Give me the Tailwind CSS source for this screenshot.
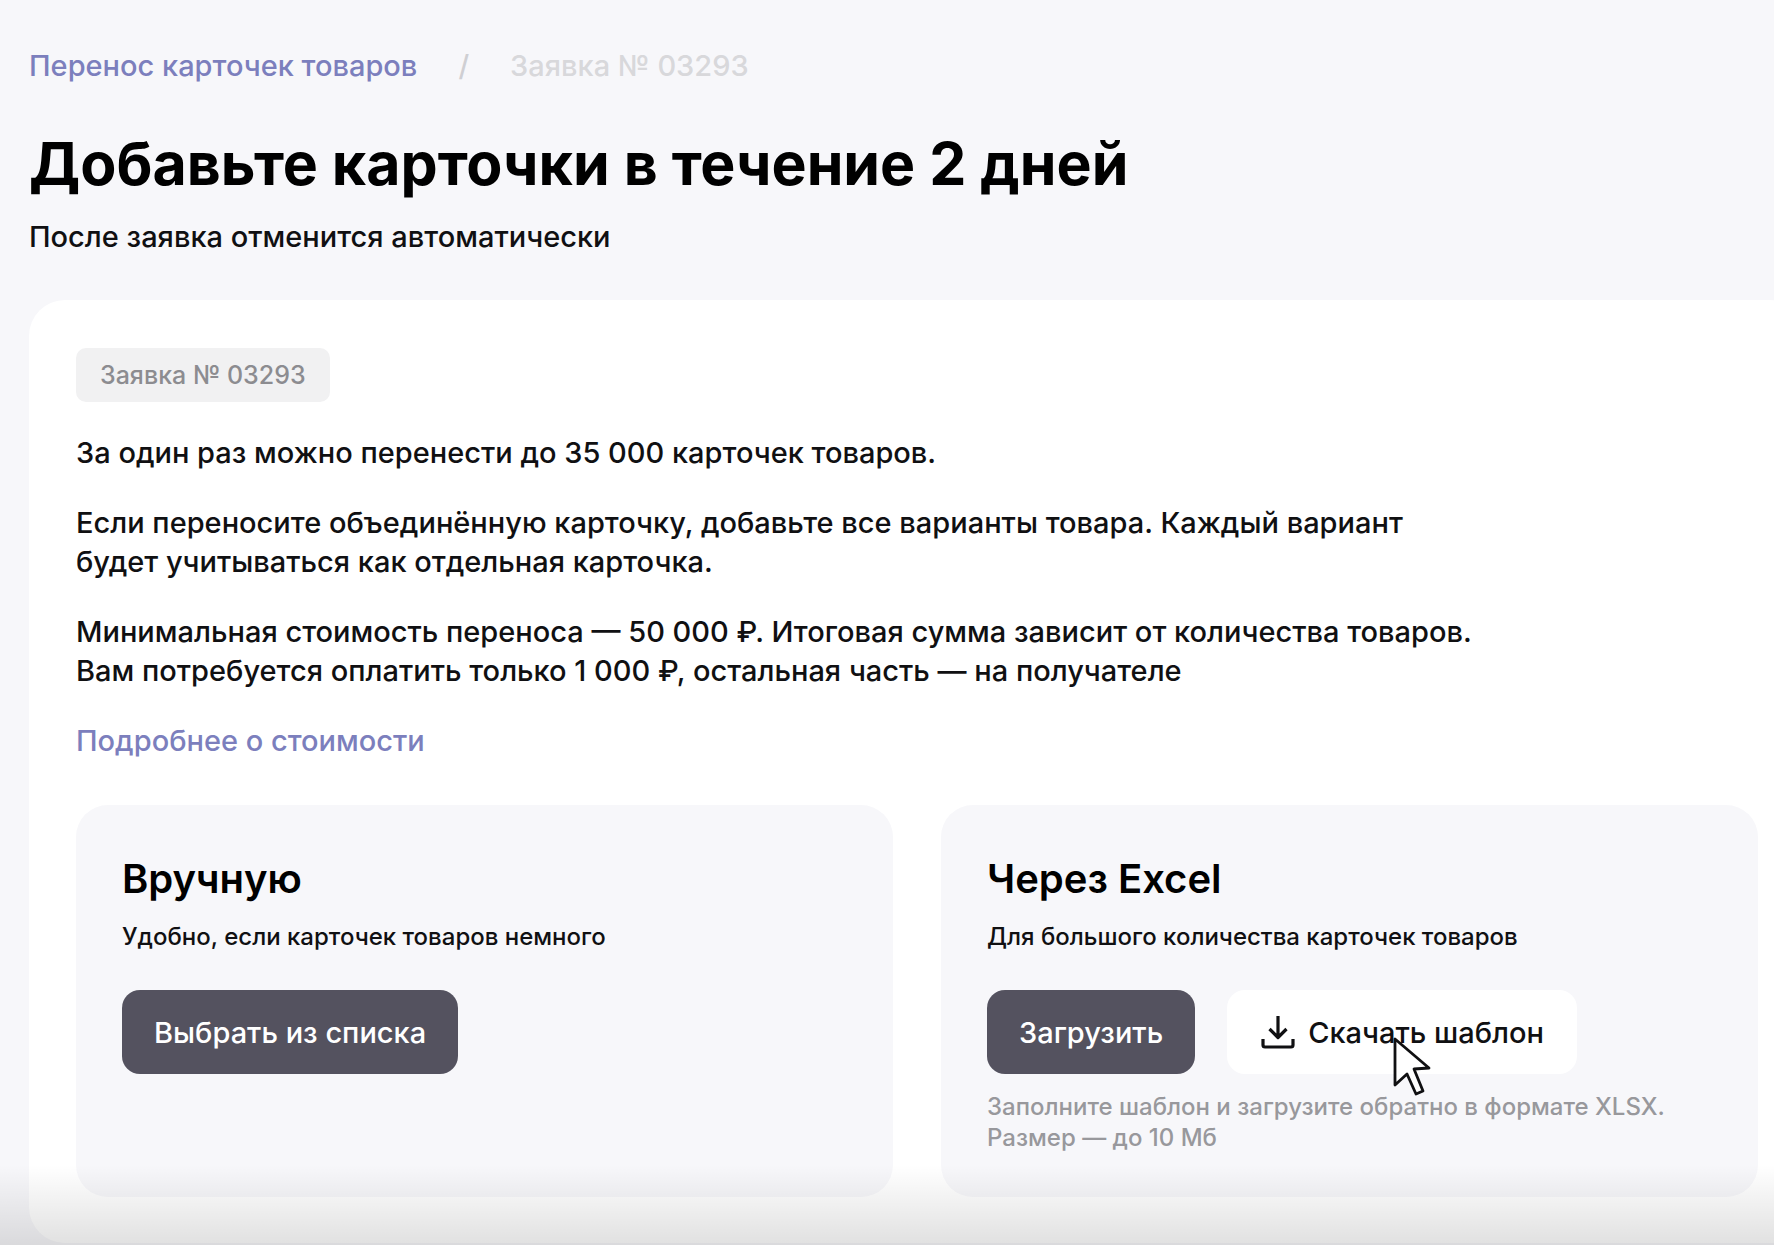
<!DOCTYPE html>
<html lang="ru">
<head>
  <meta charset="UTF-8">
  <meta name="viewport" content="width=device-width, initial-scale=1.0">
  <title>Перенос карточек товаров</title>
  <script src="https://cdn.jsdelivr.net/npm/@tailwindcss/browser@4"></script>
</head>
<body class="relative min-h-screen overflow-x-hidden bg-[#f7f7fa] font-['Inter','Noto_Sans',sans-serif] text-[29px] leading-[39px] font-medium text-[#101012]">
  <div class="pl-[29px] pt-[46px]">
    <nav class="flex items-center leading-10">
      <a href="#" class="text-[#7c7fbd]">Перенос карточек товаров</a>
      <span class="px-[41px] text-[#cfcfd3]">/</span>
      <span class="text-[#d8d8db]">Заявка № 03293</span>
    </nav>

    <header class="pt-10">
      <h1 class="text-[59px] leading-[76px] font-bold text-black">Добавьте карточки в течение 2 дней</h1>
      <p class="pt-[15px]">После заявка отменится автоматически</p>
    </header>

    <!-- the card runs past the right edge of the window -->
    <main class="-mr-[31px] mt-11 rounded-[36px] bg-white px-[47px] pt-12 pb-[46px]">
      <div class="inline-block rounded-[10px] bg-[#f1f1f2] px-6 py-[11px] text-[25px] leading-8 text-[#8c8c90]">Заявка № 03293</div>

      <div class="flex flex-col gap-[31px] pt-[31px]">
        <p>За один раз можно перенести до 35 000 карточек товаров.</p>
        <p>Если переносите объединённую карточку, добавьте все варианты товара. Каждый вариант<br>будет учитываться как отдельная карточка.</p>
        <p>Минимальная стоимость переноса — 50 000 ₽. Итоговая сумма зависит от количества товаров.<br>Вам потребуется оплатить только 1 000 ₽, остальная часть — на получателе</p>
        <a href="#" class="self-start text-[#7c7fbd]">Подробнее о стоимости</a>
      </div>

      <div class="grid grid-cols-2 gap-12 pt-[45px]">
        <section class="rounded-[32px] bg-[#f7f7fa] px-[46px] pt-12 pb-11">
          <h2 class="text-[40px] leading-[52px] font-semibold text-black">Вручную</h2>
          <p class="pt-4 text-2xl leading-8">Удобно, если карточек товаров немного</p>
          <button type="button" class="mt-[37px] h-[84px] cursor-pointer rounded-[18px] bg-[#54525f] px-8 text-white">Выбрать из списка</button>
        </section>

        <section class="rounded-[32px] bg-[#f7f7fa] px-[46px] pt-12 pb-11">
          <h2 class="text-[40px] leading-[52px] font-semibold text-black">Через Excel</h2>
          <p class="pt-4 text-2xl leading-8">Для большого количества карточек товаров</p>
          <div class="mt-[37px] flex gap-8">
            <button type="button" class="h-[84px] cursor-pointer rounded-[18px] bg-[#54525f] px-8 text-white">Загрузить</button>
            <button type="button" class="relative flex h-[84px] cursor-pointer items-center gap-3 rounded-[18px] bg-white px-[33px]">
              <svg class="size-9" viewBox="0 0 36 36" fill="none" stroke="#101012" stroke-width="3.200" stroke-linejoin="round">
                <path d="M18 2v21M9.500 15l8.500 8.500L26.500 15M3 25v6q0 2 2 2h26q2 0 2-2v-6" />
              </svg>
              Скачать шаблон
              <!-- mouse pointer -->
              <svg class="absolute left-[165px] top-[46px] h-[62px] w-[42px]" viewBox="0 0 42 62" fill="white" stroke="#101012" stroke-width="2.800" stroke-linejoin="round">
                <path d="M3 3v46l12-11 9 20 7-3-9-22 15-1z" />
              </svg>
            </button>
          </div>
          <p class="pt-[17px] text-2xl leading-[31px] text-[#98989c]">Заполните шаблон и загрузите обратно в формате XLSX.<br>Размер — до 10 Мб</p>
        </section>
      </div>
    </main>
  </div>

  <div class="pointer-events-none absolute inset-x-0 bottom-0 h-20 bg-linear-to-b from-transparent to-black/12"></div>
</body>
</html>
